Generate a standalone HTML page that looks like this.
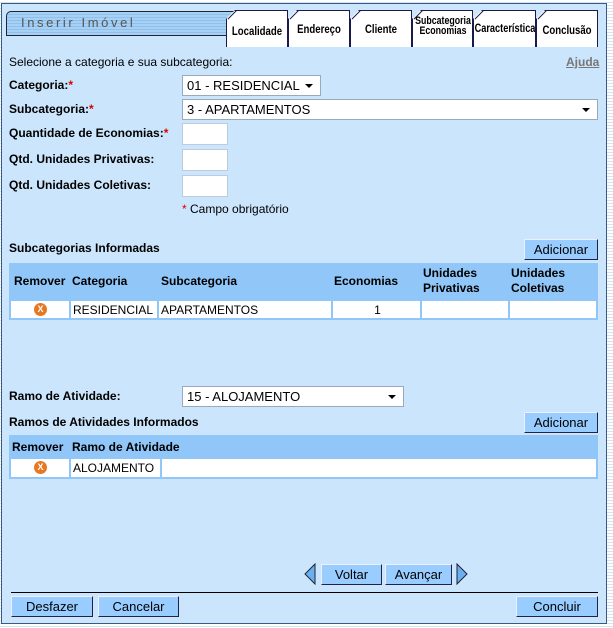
<!DOCTYPE html>
<html><head><meta charset="utf-8"><style>
*{box-sizing:border-box;margin:0;padding:0}
body{width:613px;height:628px;position:relative;overflow:hidden;background:#fff;font-family:"Liberation Sans",Arial,sans-serif;font-size:12px;color:#000}
.stripe{position:absolute;left:0;top:0;width:613px;height:628px;background:repeating-linear-gradient(#fff 0 2px,#cfe3f7 2px 3px)}
.panel{position:absolute;left:1px;top:3px;width:606px;height:621px;background:#cbe5fc;border:1px solid #3c5a80}
.a{position:absolute;white-space:nowrap}
.title{position:absolute;left:6px;top:11px;width:240px;height:25px;border:1px solid #223;border-radius:5px 0 0 0;background:repeating-linear-gradient(#a6d0f4 0 2px,#8fbfec 2px 3px);color:#555;font-size:13px;letter-spacing:2.6px;padding:3px 0 0 14px}
.tab{position:absolute;top:10px;height:37px;background:#fff;border:1px solid #1a1a4a;border-bottom:none;font-weight:bold;font-size:12px;text-align:center;clip-path:polygon(9px 0,100% 0,100% 100%,0 100%,0 9px);white-space:nowrap;overflow:hidden}
.tab span{position:absolute;left:50%;transform:translateX(-50%) scaleX(0.8)}
.tab:before{content:"";position:absolute;left:-1px;top:3px;width:13px;height:1px;background:#1a1a4a;transform:rotate(-45deg)}
.b{font-weight:bold}
.red{color:#d00}
.sel{position:absolute;background:#fff;border:1px solid #9ab;height:21px;font-size:13px;padding:2px 0 0 4px}
.sel:after{content:"";position:absolute;right:7px;top:8px;border-left:4px solid transparent;border-right:4px solid transparent;border-top:4px solid #000}
.inp{position:absolute;left:182px;width:46px;height:22px;background:#fff;border:1px solid #bcd}
.btn{position:absolute;height:21px;background:#99ccff;border:1px solid #224;border-top-color:#eef;border-left-color:#eef;font-size:13px;text-align:center;padding-top:2px}
.th{position:absolute;background:#90c6f8}
.cell{position:absolute;background:#fff;font-size:12px;padding:2px 0 0 2px}
.x{position:absolute;width:13px;height:13px;border-radius:50%;background:#e87722;color:#fff;font-size:9px;font-weight:bold;text-align:center;line-height:13px}
</style></head><body>
<div class="stripe"></div>
<div class="panel"></div>
<div class="title">Inserir Imóvel</div>
<div class="tab" style="left:226px;width:62px"><span style="top:13px">Localidade</span></div>
<div class="tab" style="left:288px;width:62px"><span style="top:11px">Endereço</span></div>
<div class="tab" style="left:350px;width:62px"><span style="top:11px">Cliente</span></div>
<div class="tab" style="left:412px;width:61px;font-size:11px;line-height:10px"><span style="top:5px">Subcategoria<br>Economias</span></div>
<div class="tab" style="left:473px;width:63px;font-size:11.5px"><span style="top:12px">Característica</span></div>
<div class="tab" style="left:536px;width:62px"><span style="top:12px">Conclusão</span></div>

<div class="a" style="left:9px;top:55px;font-size:12px">Selecione a categoria e sua subcategoria:</div>
<div class="a b" style="left:566px;top:55px;color:#777;text-decoration:underline">Ajuda</div>
<div class="a b" style="left:9px;top:78px">Categoria:<span class="red">*</span></div>
<div class="sel" style="left:182px;top:75px;width:139px">01 - RESIDENCIAL</div>
<div class="a b" style="left:9px;top:102px">Subcategoria:<span class="red">*</span></div>
<div class="sel" style="left:182px;top:99px;width:416px">3 - APARTAMENTOS</div>
<div class="a b" style="left:9px;top:126px">Quantidade de Economias:<span class="red">*</span></div>
<div class="inp" style="top:123px"></div>
<div class="a b" style="left:9px;top:152px">Qtd. Unidades Privativas:</div>
<div class="inp" style="top:149px"></div>
<div class="a b" style="left:9px;top:178px">Qtd. Unidades Coletivas:</div>
<div class="inp" style="top:175px"></div>
<div class="a" style="left:182px;top:202px"><span class="red">*</span> Campo obrigatório</div>

<div class="a b" style="left:9px;top:241px">Subcategorias Informadas</div>
<div class="btn" style="left:524px;top:239px;width:74px">Adicionar</div>
<div class="th" style="left:9px;top:263px;width:589px;height:57px"></div>
<div class="a b" style="left:14px;top:274px">Remover</div>
<div class="a b" style="left:72px;top:274px">Categoria</div>
<div class="a b" style="left:161px;top:274px">Subcategoria</div>
<div class="a b" style="left:334px;top:274px">Economias</div>
<div class="a b" style="left:423px;top:266px;line-height:15px">Unidades<br>Privativas</div>
<div class="a b" style="left:511px;top:266px;line-height:15px">Unidades<br>Coletivas</div>
<div class="cell" style="left:11px;top:301px;width:58px;height:17px"></div>
<div class="x" style="left:34px;top:303px">X</div>
<div class="cell" style="left:71px;top:301px;width:86px;height:17px">RESIDENCIAL</div>
<div class="cell" style="left:159px;top:301px;width:172px;height:17px">APARTAMENTOS</div>
<div class="cell" style="left:333px;top:301px;width:87px;height:17px;text-align:center">1</div>
<div class="cell" style="left:422px;top:301px;width:86px;height:17px"></div>
<div class="cell" style="left:510px;top:301px;width:86px;height:17px"></div>

<div class="a b" style="left:9px;top:389px">Ramo de Atividade:</div>
<div class="sel" style="left:182px;top:386px;width:222px">15 - ALOJAMENTO</div>
<div class="a b" style="left:9px;top:415px">Ramos de Atividades Informados</div>
<div class="btn" style="left:524px;top:412px;width:74px">Adicionar</div>
<div class="th" style="left:9px;top:435px;width:589px;height:44px"></div>
<div class="a b" style="left:12px;top:440px">Remover</div>
<div class="a b" style="left:72px;top:440px">Ramo de Atividade</div>
<div class="cell" style="left:11px;top:459px;width:58px;height:18px"></div>
<div class="x" style="left:34px;top:461px">X</div>
<div class="cell" style="left:71px;top:459px;width:89px;height:18px">ALOJAMENTO</div>
<div class="cell" style="left:162px;top:459px;width:434px;height:18px"></div>

<svg class="a" style="left:303px;top:563px" width="14" height="22"><polygon points="12,1 2,11 12,21" fill="#6ab0f0" stroke="#223" stroke-width="1"/></svg>
<div class="btn" style="left:321px;top:564px;width:61px">Voltar</div>
<div class="btn" style="left:385px;top:564px;width:67px">Avançar</div>
<svg class="a" style="left:455px;top:563px" width="14" height="22"><polygon points="2,1 12,11 2,21" fill="#6ab0f0" stroke="#223" stroke-width="1"/></svg>
<div class="a" style="left:11px;top:592px;width:587px;height:1px;background:#000"></div>
<div class="btn" style="left:11px;top:596px;width:82px">Desfazer</div>
<div class="btn" style="left:98px;top:596px;width:81px">Cancelar</div>
<div class="btn" style="left:516px;top:596px;width:82px">Concluir</div>
</body></html>
